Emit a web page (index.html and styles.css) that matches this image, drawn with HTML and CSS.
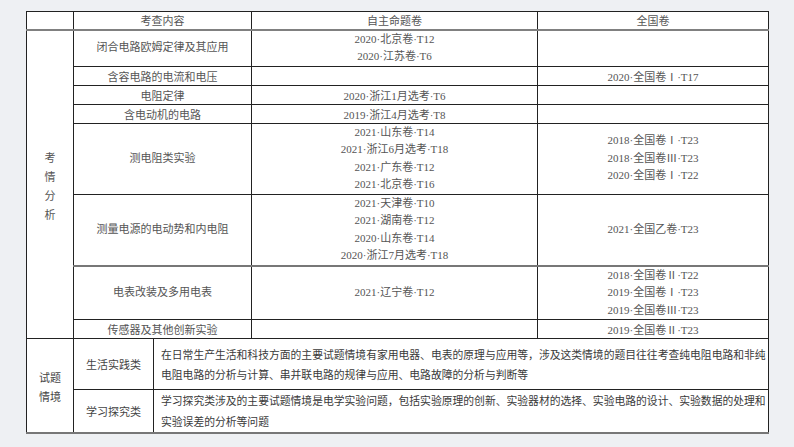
FILE: index.html
```html
<!DOCTYPE html>
<html lang="zh">
<head>
<meta charset="utf-8">
<link rel="stylesheet" href="styles.css">
</head>
<body>
<div class="page">
<table class="grid">
  <colgroup>
    <col class="c1"><col class="c2"><col class="c3"><col class="c4"><col class="c5">
  </colgroup>
  <tr class="h19 head">
    <td></td>
    <td colspan="2">考查内容</td>
    <td>自主命题卷</td>
    <td>全国卷</td>
  </tr>
  <tr class="h36 two">
    <td rowspan="8" class="side">考<br>情<br>分<br>析</td>
    <td colspan="2">闭合电路欧姆定律及其应用</td>
    <td>2020·北京卷·T12<br>2020·江苏卷·T6</td>
    <td></td>
  </tr>
  <tr class="h18">
    <td colspan="2">含容电路的电流和电压</td>
    <td></td>
    <td>2020·全国卷Ⅰ·T17</td>
  </tr>
  <tr class="h18">
    <td colspan="2">电阻定律</td>
    <td>2020·浙江1月选考·T6</td>
    <td></td>
  </tr>
  <tr class="h18">
    <td colspan="2">含电动机的电路</td>
    <td>2019·浙江4月选考·T8</td>
    <td></td>
  </tr>
  <tr class="h72 four">
    <td colspan="2">测电阻类实验</td>
    <td>2021·山东卷·T14<br>2021·浙江6月选考·T18<br>2021·广东卷·T12<br>2021·北京卷·T16</td>
    <td>2018·全国卷Ⅰ·T23<br>2018·全国卷Ⅲ·T23<br>2020·全国卷Ⅰ·T22</td>
  </tr>
  <tr class="h72 four thick">
    <td colspan="2">测量电源的电动势和内电阻</td>
    <td>2021·天津卷·T10<br>2021·湖南卷·T12<br>2020·山东卷·T14<br>2020·浙江7月选考·T18</td>
    <td>2021·全国乙卷·T23</td>
  </tr>
  <tr class="h55 three">
    <td colspan="2">电表改装及多用电表</td>
    <td>2021·辽宁卷·T12</td>
    <td>2018·全国卷Ⅱ·T22<br>2019·全国卷Ⅰ·T23<br>2019·全国卷Ⅲ·T23</td>
  </tr>
  <tr class="h18">
    <td colspan="2">传感器及其他创新实验</td>
    <td></td>
    <td>2019·全国卷Ⅱ·T23</td>
  </tr>
  <tr class="h52 low">
    <td rowspan="2" class="side2">试题<br>情境</td>
    <td>生活实践类</td>
    <td colspan="3" class="desc">
      <div class="jl">在日常生产生活和科技方面的主要试题情境有家用电器、电表的原理与应用等，涉及这类情境的题目往往考查纯电阻电路和非纯</div>
      <div>电阻电路的分析与计算、串并联电路的规律与应用、电路故障的分析与判断等</div>
    </td>
  </tr>
  <tr class="h41 low last">
    <td>学习探究类</td>
    <td colspan="3" class="desc desc2">
      <div class="jl">学习探究类涉及的主要试题情境是电学实验问题，包括实验原理的创新、实验器材的选择、实验电路的设计、实验数据的处理和</div>
      <div>实验误差的分析等问题</div>
    </td>
  </tr>
</table>
</div>
</body>
</html>
```

FILE: styles.css
```css
html, body {
  margin: 0;
  padding: 0;
}
body {
  background: #eef0f3;
  width: 794px;
  height: 447px;
  overflow: hidden;
}
.page {
  padding: 11px 0 0 26px;
}
.grid {
  border-collapse: collapse;
  table-layout: fixed;
  width: 742px;
  background: #ffffff;
  font-family: "Liberation Serif", "Noto Sans CJK SC", serif;
  font-size: 11px;
  line-height: 16px;
  color: #555;
  border-top: 1px solid #222;
  border-left: 1px solid #222;
  border-right: 1px solid #222;
  border-bottom: 2px solid #777;
}
.c1 { width: 47px; }
.c2 { width: 80px; }
.c3 { width: 98px; }
.c4 { width: 286px; }
.c5 { width: 231px; }
.grid td {
  border: 1px solid #222;
  padding: 0;
  text-align: center;
  vertical-align: middle;
  white-space: nowrap;
}
.head td {
  border-bottom: 2px solid #808080;
  line-height: 14px;
  padding-top: 2px;
}
.thick td {
  border-bottom: 2px solid #777;
}
.h19 { height: 18px; }
.h18 { height: 17px; }
.h36 { height: 35px; }
.h72 { height: 71px; }
.h55 { height: 54px; }
.h52 { height: 51px; }
.h41 { height: 39px; }
.h18 td { padding-top: 2px; }
.two td { line-height: 17.5px; padding-top: 0; }
.four td { line-height: 17.5px; }
.three td { line-height: 17.5px; }
.grid td.side {
  line-height: 19px;
  font-family: "Noto Sans CJK SC", sans-serif;
  padding-top: 4px;
}
.grid td.side2 {
  line-height: 19px;
  padding-top: 3px;
}
.low td {
  color: #444;
  font-family: "Noto Sans CJK SC", sans-serif;
}
.grid td.desc {
  text-align: left;
  padding: 0 5px 0 7px;
  line-height: 20px;
  color: #3a3a3a;
  font-size: 10.8px;
}
.grid td.desc2 {
  line-height: 21px;
}
.jl {
  text-align: justify;
  text-align-last: justify;
}
.last td {
  border-bottom: 2px solid #777;
}
```
